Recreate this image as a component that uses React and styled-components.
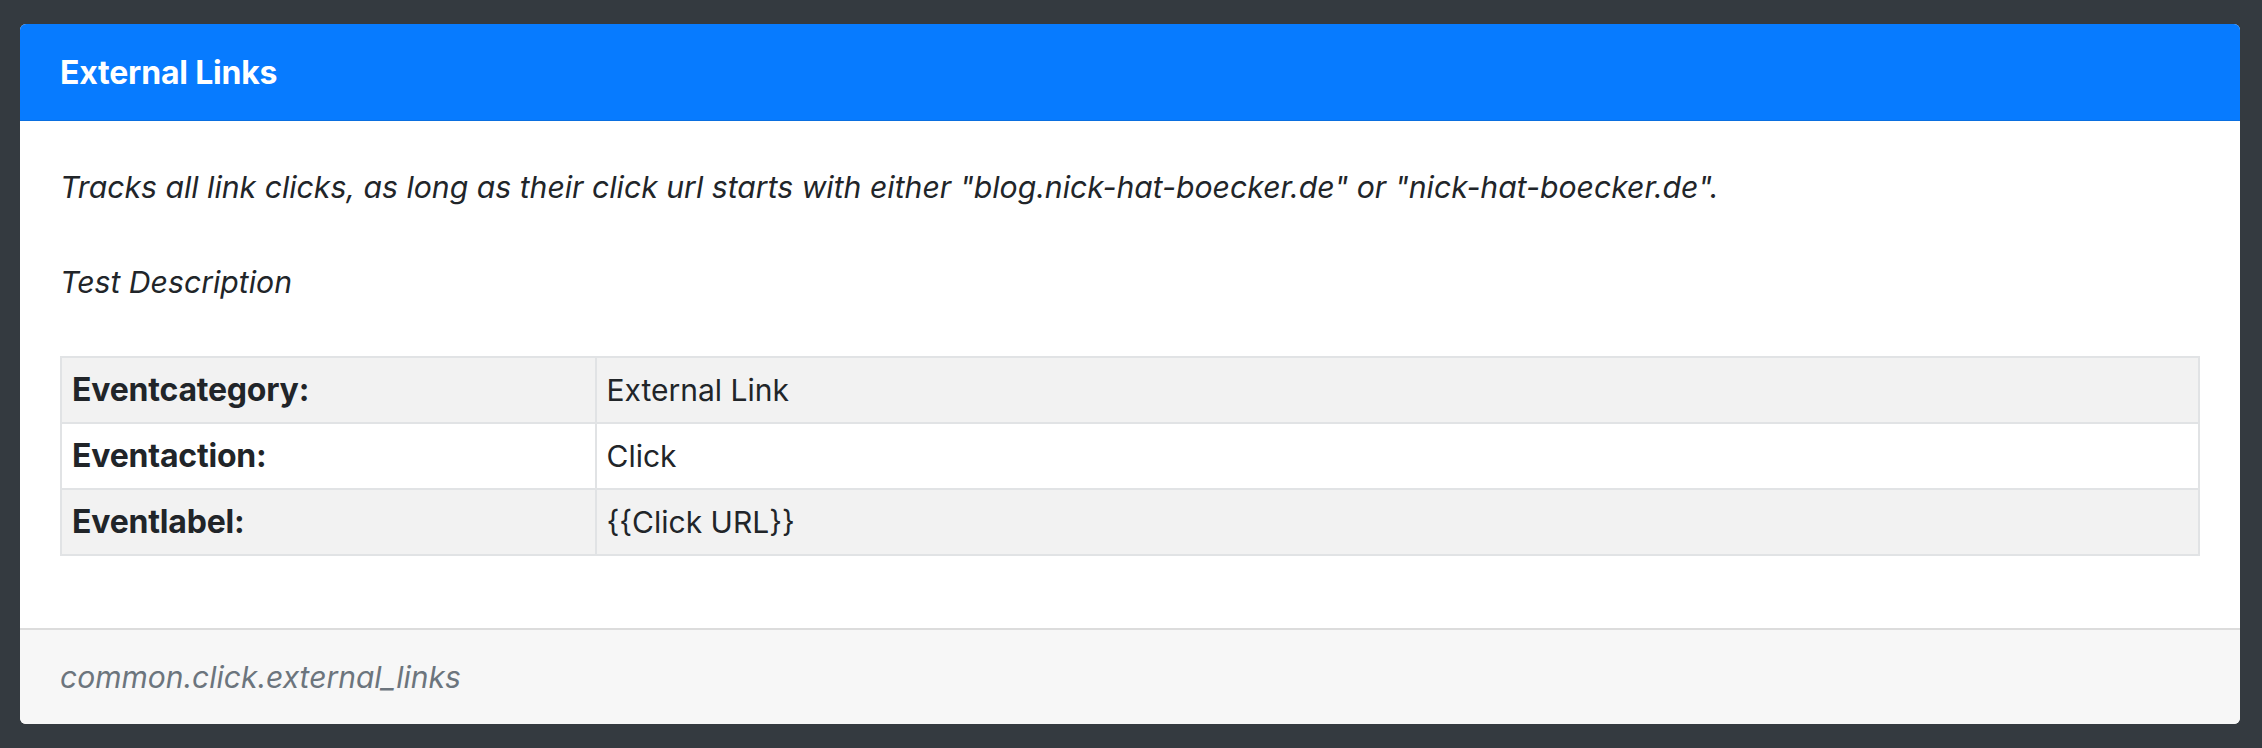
import styled, { createGlobalStyle } from "styled-components";

const GlobalStyle = createGlobalStyle`
    html, body {
        margin: 0;
        background: #343a40;
    }
    body {
        font-family: Inter, "Noto Sans", "Liberation Sans", sans-serif;
        color: #212529;
    }
`

const rows = [
    { label: "Eventcategory:", value: "External Link" },
    { label: "Eventaction:", value: "Click" },
    { label: "Eventlabel:", value: "{{Click URL}}" },
];

const App = () => {
    return (
        <>
            <GlobalStyle />
            <StyledPage>
                <StyledCard>
                    <StyledHeader>
                        <StyledTitle>External Links</StyledTitle>
                    </StyledHeader>
                    <StyledBody>
                        <StyledText>
                            Tracks all link clicks, as long as their click url starts with either "blog.nick-hat-boecker.de" or "nick-hat-boecker.de".
                        </StyledText>
                        <StyledText>Test Description</StyledText>
                        <StyledTable>
                            <tbody>
                                {rows.map((row, i) => (
                                    <StyledRow key={row.label} $striped={i % 2 === 0}>
                                        <StyledLabel>{row.label}</StyledLabel>
                                        <StyledValue>{row.value}</StyledValue>
                                    </StyledRow>
                                ))}
                            </tbody>
                        </StyledTable>
                    </StyledBody>
                    <StyledFooter>
                        <StyledKey>common.click.external_links</StyledKey>
                    </StyledFooter>
                </StyledCard>
            </StyledPage>
        </>
    )
}

const StyledPage = styled.div`
    padding: 24px 22px 25px 20px;
`
const StyledCard = styled.div`
    background: #fff;
    border-radius: 6px;
    overflow: hidden;
`
const StyledHeader = styled.div`
    display: flex;
    align-items: center;
    height: 96px;
    padding: 0 40px;
    background: #077bff;
    border-bottom: 1px solid #0a6fe0;
`
const StyledTitle = styled.h5`
    margin: 0;
    color: #fff;
    font-size: 32px;
    font-weight: 700;
    letter-spacing: -0.2px;
`
const StyledBody = styled.div`
    padding: 45px 40px 40px;
`
const StyledText = styled.p`
    margin: 0 0 53px;
    font-size: 30.2px;
    line-height: 42px;
    font-style: italic;
`
const StyledTable = styled.table`
    width: 100%;
    border-collapse: collapse;
    border: 2px solid #e1e3e5;
    margin-bottom: 32px;
`
const StyledRow = styled.tr`
    background: ${({ $striped }) => ($striped ? "#f2f2f2" : "#fff")};
`
const StyledLabel = styled.th`
    width: 25%;
    padding: 12px 10px;
    border: 2px solid #e1e3e5;
    text-align: left;
    font-size: 32px;
    line-height: 40px;
    font-weight: 700;
    letter-spacing: -0.2px;
`
const StyledValue = styled.td`
    padding: 12px 10px;
    border: 2px solid #e1e3e5;
    font-size: 30px;
    line-height: 40px;
`
const StyledFooter = styled.div`
    display: flex;
    align-items: center;
    height: 94px;
    padding: 0 40px;
    background: #f7f7f7;
    border-top: 2px solid #dcdcdc;
`
const StyledKey = styled.span`
    color: #6c757d;
    font-size: 30px;
    font-style: italic;
`

export default App
